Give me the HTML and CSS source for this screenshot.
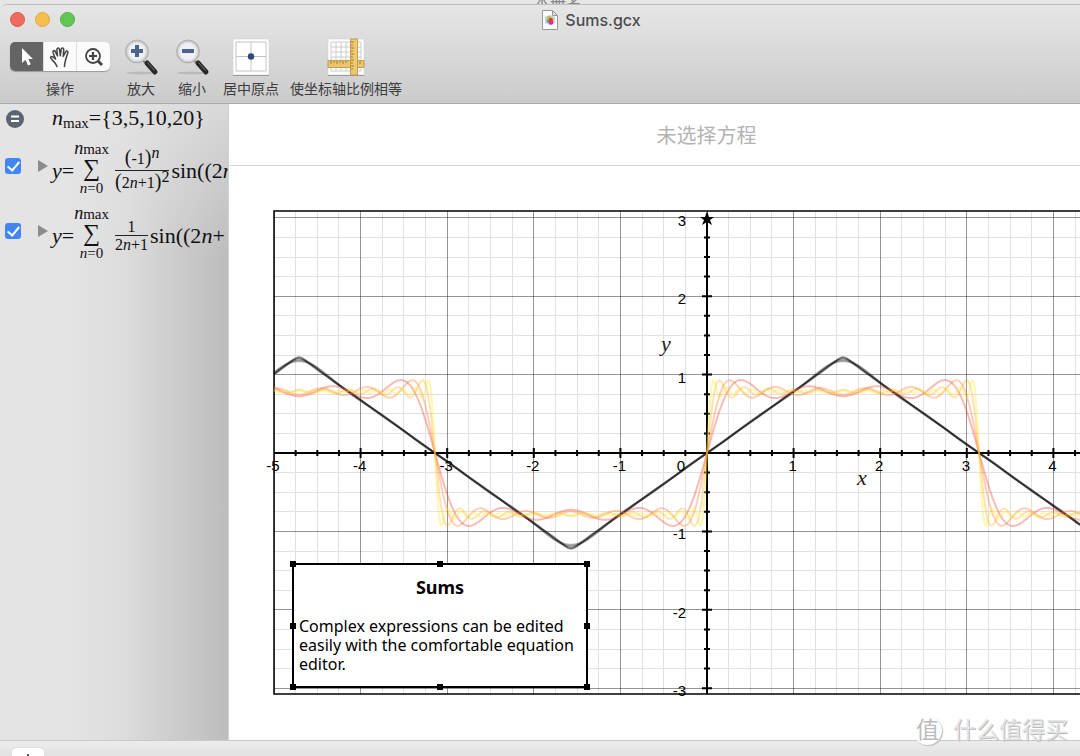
FILE: index.html
```html
<!DOCTYPE html>
<html lang="zh-CN">
<head>
<meta charset="utf-8">
<meta name="viewport" content="width=device-width, initial-scale=1">
<title>Sums.gcx</title>
<link rel="stylesheet" href="styles.css">
</head>
<body>
<div class="backdrop">本册名</div>
<div class="window">
  <header class="chrome">
    <div class="titlebar">
      <div class="lights">
        <button class="light light-close" aria-label="关闭"></button>
        <button class="light light-min" aria-label="最小化"></button>
        <button class="light light-zoom" aria-label="缩放"></button>
      </div>
      <h1 class="title">
        <svg width="16" height="20" viewBox="0 0 16 20" aria-hidden="true">
          <path d="M.5.5h10l5 5v14H.5z" fill="#fafafa" stroke="#999"/>
          <path d="M10.500 .5v5h5z" fill="#ddd" stroke="#999"/>
          <path d="M3 7l5-2 5 2v6l-5 2-5-2z" fill="#c4cfd2"/>
          <circle cx="7" cy="8" r="2.200" fill="#a9cf38"/><circle cx="6.500" cy="11" r="1.800" fill="#5a9ad8"/>
          <circle cx="9" cy="12.500" r="2.300" fill="#d026c8"/><circle cx="8.800" cy="10" r="2.200" fill="#ee3d20"/>
        </svg>
        <span>Sums.gcx</span>
      </h1>
    </div>
    <nav class="toolbar" aria-label="工具栏">
      <div class="tool">
        <div class="segments">
          <button class="segment segment-on" aria-label="选择">
            <svg width="14" height="20" viewBox="0 0 14 20"><path d="M2 1v15l3.500-3.300L8 18.500l2.800-1.200L8.300 12H13z" fill="#fff"/></svg>
          </button>
          <button class="segment" aria-label="移动">
            <svg width="22" height="22" viewBox="0 0 22 22" fill="none" stroke="#444" stroke-width="1.500" stroke-linecap="round" stroke-linejoin="round"><path d="M8 20.500C7 17 4.500 15.500 2 12.500c-1-1.500.8-2.700 2.200-1.400L6.500 13 4 6.500c-.6-1.900 1.600-2.600 2.300-.9L8.500 10 7.900 3.500c0-2 2.300-2.100 2.600-.2l.8 6.400.9-6.500c.4-1.800 2.600-1.500 2.500.4l-.5 6.800 2.400-4.600c1-1.500 2.800-.6 2.200 1L17 12.500c-.6 3-1.500 4-1.500 8"/></svg>
          </button>
          <button class="segment" aria-label="缩放选区">
            <svg width="20" height="20" viewBox="0 0 20 20" fill="none" stroke="#444" stroke-width="1.800"><circle cx="9" cy="9" r="7"/><path d="M5 9h8M9 5v8" stroke-width="2.200"/><path d="M14 14l4 4" stroke-width="2.800"/></svg>
          </button>
        </div>
        <span class="tool-name">操作</span>
      </div>
      <button class="tool">
        <svg class="tool-icon" width="36" height="38" viewBox="0 0 36 38" aria-hidden="true">
          <ellipse cx="17" cy="35" rx="14" ry="1.500" fill="#aaa" opacity=".6"/>
          <path d="M20 23l4 3" stroke="#888" stroke-width="2"/><path d="M24 25l8 9" stroke="#282828" stroke-width="5" stroke-linecap="round"/><path d="M24.500 24.500l7 8" stroke="#777" stroke-width="1"/>
          <circle cx="14" cy="13.500" r="10.500" fill="#eef0f3" stroke="#c4c4c4" stroke-width="1.500"/><circle cx="14" cy="13.500" r="11.500" fill="none" stroke="#999" stroke-width=".6"/><circle cx="14" cy="13.500" r="9" fill="none" stroke="#ccc" stroke-width=".6"/>
          <path d="M8 13h12M14 7v12" stroke="#4b6391" stroke-width="4"/>
        </svg>
        <span class="tool-name">放大</span>
      </button>
      <button class="tool">
        <svg class="tool-icon" width="36" height="38" viewBox="0 0 36 38" aria-hidden="true">
          <ellipse cx="17" cy="35" rx="14" ry="1.500" fill="#aaa" opacity=".6"/>
          <path d="M20 23l4 3" stroke="#888" stroke-width="2"/><path d="M24 25l8 9" stroke="#282828" stroke-width="5" stroke-linecap="round"/><path d="M24.500 24.500l7 8" stroke="#777" stroke-width="1"/>
          <circle cx="14" cy="13.500" r="10.500" fill="#eef0f3" stroke="#c4c4c4" stroke-width="1.500"/><circle cx="14" cy="13.500" r="11.500" fill="none" stroke="#999" stroke-width=".6"/><circle cx="14" cy="13.500" r="9" fill="none" stroke="#ccc" stroke-width=".6"/>
          <path d="M8 13h12" stroke="#4b6391" stroke-width="4"/>
        </svg>
        <span class="tool-name">缩小</span>
      </button>
      <button class="tool">
        <svg class="tool-icon" width="38" height="38" viewBox="0 0 38 38" aria-hidden="true">
          <rect x="1" y="2" width="36" height="36" fill="#888"/><rect x="1" y="1" width="36" height="36" fill="#fff" stroke="#ccc" stroke-width=".5"/>
          <path d="M4 4h30v29H4zM4 18.500h30M19 4v29" fill="none" stroke="#c4c4c4"/><circle cx="19" cy="18.500" r="3.200" fill="#294b78"/>
        </svg>
        <span class="tool-name">居中原点</span>
      </button>
      <button class="tool">
        <svg class="tool-icon" width="38" height="38" viewBox="0 0 38 38" aria-hidden="true">
          <rect x="1" y="2" width="36" height="36" fill="#888"/><rect x="1" y="1" width="36" height="36" fill="#fff" stroke="#ccc" stroke-width=".5"/>
          <path d="M4 4h30v29H4zM9 4v29M14 4v29M19 4v29M4 9h30M4 14h30M4 19h30M4 29h30" fill="none" stroke="#ccc"/>
          <path d="M1 22.500h36v7H1z" fill="#ecc66c" stroke="#bd903b" stroke-width=".8"/>
          <path d="M23.500 1h7v36h-7z" fill="#edc970" stroke="#bd903b" stroke-width=".8"/>
          <path d="M4 23v3M7 23v2M10 23v3M13 23v2M16 23v3M19 23v2M24 4h3M24 7h2M24 10h3M24 13h2M24 16h3M24 19h2M24 22h3M24 25h2M24 28h3M24 31h2M33 23v3" stroke="#8d672a" stroke-width=".8"/>
        </svg>
        <span class="tool-name">使坐标轴比例相等</span>
      </button>
    </nav>
  </header>

  <div class="body">
    <aside class="sidebar">
      <div class="equation equation-short">
        <svg class="equals" width="18" height="18" viewBox="0 0 18 18" aria-hidden="true"><circle cx="9" cy="9" r="9" fill="#5b6571"/><path d="M5 6.500h8M5 11h8" stroke="#fff" stroke-width="2"/></svg>
        <div class="formula formula-flat"><i>n</i><sub>max</sub>={3,5,10,20}</div>
      </div>
      <div class="equation">
        <input class="check" type="checkbox" checked aria-label="显示第一个方程">
        <button class="disclosure" aria-label="展开第一个方程"></button>
        <div class="formula">
          <span><i>y</i>=</span>
          <span class="sum"><span><i class="sum-n">n</i>max</span><span class="sigma">∑</span><span><i>n</i>=0</span></span>
          <span class="fraction"><span class="numerator"><span class="paren">(</span>-1<span class="paren">)</span><sup><i>n</i></sup></span><span class="denominator"><span class="paren">(</span>2<i>n</i>+1<span class="paren">)</span><sup>2</sup></span></span>
          <span>sin((2<i>n</i></span>
        </div>
      </div>
      <div class="equation">
        <input class="check" type="checkbox" checked aria-label="显示第二个方程">
        <button class="disclosure" aria-label="展开第二个方程"></button>
        <div class="formula">
          <span><i>y</i>=</span>
          <span class="sum"><span><i class="sum-n">n</i>max</span><span class="sigma">∑</span><span><i>n</i>=0</span></span>
          <span class="fraction fraction-plain"><span class="numerator">1</span><span class="denominator">2<i>n</i>+1</span></span>
          <span>sin((2<i>n</i>+</span>
        </div>
      </div>
    </aside>

    <main class="document">
      <div class="selection">未选择方程</div>
      <div class="plot">
        <svg class="graph" id="graph" role="img" aria-label="Sums"></svg>
        <section class="note">
          <h2 class="note-title">Sums</h2>
          <p class="note-text">Complex expressions can be edited easily with the comfortable equation editor.</p>
          <div class="handles" aria-hidden="true">
            <i></i><i></i><i></i><i></i><i class="blank"></i><i></i><i></i><i></i><i></i>
          </div>
        </section>
      </div>
    </main>
  </div>
  <footer class="footer"><button class="add" aria-label="添加"><svg width="12" height="12" viewBox="0 0 12 12" stroke="#555" stroke-width="2"><path d="M0 6h12M6 0v12"/></svg></button></footer>
</div>
<div class="watermark"><span class="seal">值</span><span>什么值得买</span></div>
<script src="graph.js"></script>
</body>
</html>
```

FILE: styles.css
```css
* { box-sizing: border-box; }
html, body { height: 100%; }
body {
  margin: 0;
  display: flex;
  flex-direction: column;
  overflow: hidden;
  background: #e6e6e6;
  color: #111;
  font-family: "Inter", "Noto Sans CJK SC", sans-serif;
}
button { border: 0; padding: 0; background: none; font: inherit; color: inherit; }
svg { display: block; }

.backdrop {
  flex: none;
  height: 4px;
  overflow: hidden;
  display: flex;
  align-items: center;
  justify-content: center;
  padding-left: 36px;
  font-size: 16px;
  line-height: 16px;
  color: #888;
}
.window {
  flex: 1;
  min-height: 0;
  display: flex;
  flex-direction: column;
  border-top: 1px solid #bdbdbd;
  border-radius: 7px 0 0 0;
  overflow: hidden;
}

.chrome {
  flex: none;
  background: linear-gradient(#e6e6e6, #cbcbcb);
  border-bottom: 1px solid #aaa;
}
.titlebar {
  display: grid;
  grid-template-columns: 1fr auto 1fr;
  align-items: center;
  height: 29px;
  padding-left: 10px;
}
.lights { display: flex; gap: 10px; }
.light { width: 15px; height: 15px; border-radius: 50%; }
.light-close { background: #ee6a5e; border: 1px solid #dc5a4e; }
.light-min { background: #f5bf4f; border: 1px solid #dfa73b; }
.light-zoom { background: #61c654; border: 1px solid #4fae43; }
.title {
  display: flex;
  align-items: center;
  gap: 7px;
  margin: 0;
  padding-left: 93px;
  font-size: 16px;
  font-weight: 500;
  color: #4c4c4c;
}
.toolbar { display: flex; gap: 11px; height: 69px; padding-left: 10px; }
.tool {
  display: flex;
  flex-direction: column;
  align-items: center;
  justify-content: space-between;
  min-width: 40px;
  height: 65px;
  padding-top: 4px;
}
.tool-icon { flex: none; }
.tool-name { font-size: 14px; line-height: 20px; color: #3c3c3c; }
.segments {
  display: flex;
  height: 29px;
  margin-top: 4px;
  border-radius: 5px;
  overflow: hidden;
  background: #fbfbfb;
  box-shadow: 0 1px 1px #999;
}
.segment { display: grid; place-items: center; width: 33px; border-right: 1px solid #ddd; }
.segment:last-child { border-right: 0; }
.segment-on { width: 34px; background: #646464; }

.body { flex: 1; min-height: 0; display: flex; }
.sidebar {
  flex: none;
  width: 228px;
  overflow: hidden;
  background:
    linear-gradient(rgba(228, 228, 228, 0.7), rgba(228, 228, 228, 0) 150px),
    linear-gradient(90deg, #e4e4e4 30%, #dcdcdc 55%, #bebebe 98%);
}
.equation { display: flex; align-items: center; height: 65px; padding-left: 5px; }
.equation-short { height: 32px; padding: 0 0 2px 6px; }
.equals { flex: none; margin-right: 28px; }
.check {
  appearance: none;
  flex: none;
  display: grid;
  place-items: center;
  width: 16px;
  height: 16px;
  margin: 0 17px 5px 0;
  border-radius: 3px;
  background: #4285f7;
}
.check:checked::after {
  content: "";
  width: 5px;
  height: 10px;
  margin-bottom: 2px;
  border: solid #fff;
  border-width: 0 2px 2px 0;
  transform: rotate(40deg);
}
.disclosure {
  flex: none;
  width: 10px;
  height: 12px;
  margin: 0 4px 5px 0;
  background: #8c8c8c;
  clip-path: polygon(0 0, 100% 50%, 0 100%);
}
.formula {
  display: flex;
  align-items: center;
  padding-top: 5px;
  font: 22px/26px "Liberation Serif", serif;
  white-space: nowrap;
}
.formula-flat { padding: 0 0 2px; }
.formula sub { align-self: flex-end; font-size: 15px; line-height: 16px; }
.sum {
  display: flex;
  flex-direction: column;
  align-items: center;
  margin-bottom: 6px;
  font-size: 15px;
  line-height: 16px;
}
.sum-n { font-size: 18px; }
.sigma { font-size: 24px; line-height: 23px; }
.fraction {
  display: flex;
  flex-direction: column;
  align-items: stretch;
  margin: 0 2px 2px 6px;
  text-align: center;
  font-size: 16px;
  line-height: 23px;
}
.numerator { border-bottom: 1px solid #222; }
.fraction .paren { font-size: 20px; line-height: 20px; }
.fraction sup { font-size: 16px; line-height: 10px; vertical-align: 6px; }
.fraction-plain { line-height: 17px; }
.fraction-plain .numerator { padding: 0 1px; }

.document { flex: 1; min-width: 0; overflow: hidden; border-left: 1px solid #d2d2d2; background: #fff; }
.selection {
  display: grid;
  place-items: center;
  height: 62px;
  padding-left: 104px;
  border-bottom: 1px solid #d5d5d5;
  font-size: 20px;
  color: #b3b3b3;
}
.plot { position: relative; margin: 44px 0 0 44px; }
.graph { width: 100%; height: 485px; overflow: visible; }
.grid-minor { stroke: #e1e1e1; }
.grid-major { stroke: #000; stroke-opacity: 0.42; }
.axis { stroke: #000; stroke-width: 2; fill: none; }
.frame { stroke: #000; stroke-width: 1.500; fill: none; }
.curve { fill: none; stroke-width: 2; stroke-linejoin: round; }
.tick-label { font: 15px "Liberation Sans", sans-serif; fill: #000; }
.axis-name { font: italic 22px "Liberation Serif", serif; fill: #222; }

.note {
  position: absolute;
  left: 19px;
  top: 353px;
  width: 296px;
  height: 125px;
  padding: 13px 5px;
  border: 2px solid #000;
  background: #fff;
  color: #000;
  font: 16px/19px "Noto Sans", sans-serif;
}
.note-title { margin: 0 0 20px; text-align: center; font-size: 18px; line-height: 19px; }
.note-text { margin: 0; }
.handles {
  position: absolute;
  inset: -4px;
  display: grid;
  grid-template-columns: repeat(3, 6px);
  grid-template-rows: repeat(3, 6px);
  justify-content: space-between;
  align-content: space-between;
}
.handles i { background: #000; }
.handles .blank { background: none; }

.footer {
  flex: none;
  height: 16px;
  overflow: hidden;
  padding: 7px 0 0 12px;
  border-top: 1px solid #c8c8c8;
  background: linear-gradient(#ececec, #e2e2e2);
}
.add {
  display: grid;
  place-items: center;
  width: 32px;
  height: 24px;
  border-radius: 4px;
  background: #fff;
  box-shadow: 0 0 1px #aaa;
}

.watermark {
  position: absolute;
  right: 12px;
  bottom: 10px;
  display: flex;
  align-items: center;
  gap: 11px;
  font-size: 23px;
  line-height: 32px;
  color: #e4e4e4;
  text-shadow: 1px 1px 0 #bbb, -1px -1px 0 #fff;
}
.seal {
  width: 29px;
  height: 29px;
  line-height: 28px;
  border-radius: 50%;
  text-align: center;
  background: #fff;
  box-shadow: 1px 1px 1px #bbb;
  color: #bbb;
  text-shadow: none;
}
```

FILE: graph.js
```js
const svg = document.getElementById("graph");
const NS = "http://www.w3.org/2000/svg";
const ORIGIN = { x: 434, y: 243 };
const UNIT = { x: 86.6, y: 78.4 };
const BOTTOM = 484;
const X_MIN = -5;
const WIDTH = svg.clientWidth || svg.parentNode.clientWidth;
const X_MAX = (WIDTH - ORIGIN.x) / UNIT.x;
const px = x => ORIGIN.x + x * UNIT.x;
const py = y => ORIGIN.y - y * UNIT.y;

function add(name, attrs, text) {
  const el = document.createElementNS(NS, name);
  for (const key in attrs) el.setAttribute(key, attrs[key]);
  if (text !== undefined) el.textContent = text;
  svg.appendChild(el);
}

function gridLines(major) {
  let d = "";
  for (let i = X_MIN * 4; i <= X_MAX * 4; i++) {
    if ((i % 4 === 0) === major) d += `M${Math.floor(px(i / 4)) + 0.5} 1V${BOTTOM}`;
  }
  for (let i = -12; i <= 12; i++) {
    if ((i % 4 === 0) === major) d += `M1 ${Math.floor(py(i / 4)) + 0.5}H${WIDTH}`;
  }
  return d;
}

add("path", { class: "grid-minor", d: gridLines(false) });
add("path", { class: "grid-major", d: gridLines(true) });

// Axes with quarter-unit ticks
let axes = `M1 ${ORIGIN.y}H${WIDTH}M${ORIGIN.x} 8V${BOTTOM}`;
for (let i = X_MIN * 4 + 1; i <= X_MAX * 4; i++) {
  const r = i % 4 ? 3 : 5;
  axes += `M${px(i / 4)} ${ORIGIN.y - r}v${2 * r}`;
}
for (let i = -12; i < 12; i++) {
  const r = i % 4 ? 3 : 5;
  axes += `M${ORIGIN.x - r} ${py(i / 4)}h${2 * r}`;
}
add("path", { class: "axis", d: axes });
add("path", { d: "M434 1l2 6h5l-4 3 2 5-5-3-5 3 2-5-4-3h5z" });
add("path", { class: "frame", d: `M${WIDTH} 1H1V${BOTTOM}H${WIDTH}` });

for (let x = X_MIN; x <= X_MAX; x++) {
  add("text", { class: "tick-label", "text-anchor": "middle", x: x ? px(x) - 1 : 408, y: 261 }, x);
}
for (let y = -3; y <= 3; y++) {
  if (y) add("text", { class: "tick-label", "text-anchor": "end", x: 413, y: py(y) + 8 }, y);
}
add("text", { class: "axis-name", x: 388, y: 141 }, "y");
add("text", { class: "axis-name", x: 584, y: 275 }, "x");

function curve(term, terms, stroke, opacity) {
  const points = [];
  for (let sx = 1; sx <= WIDTH; sx += 0.5) {
    const x = (sx - ORIGIN.x) / UNIT.x;
    let y = 0;
    for (let n = 0; n <= terms; n++) y += term(n) * Math.sin((2 * n + 1) * x);
    points.push(`${sx},${py(y).toFixed(2)}`);
  }
  add("polyline", { class: "curve", points: points.join(" "), stroke, "stroke-opacity": opacity });
}

const triangle = n => (n % 2 ? -1 : 1) / (2 * n + 1) ** 2;
const square = n => 1 / (2 * n + 1);
for (const terms of [3, 5, 10, 20]) curve(triangle, terms, "#000", 0.34);
curve(square, 3, "#f03c28", 0.35);
curve(square, 5, "#ff7832", 0.35);
curve(square, 10, "#ffaa1e", 0.33);
curve(square, 20, "#ffeb32", 0.4);
```
